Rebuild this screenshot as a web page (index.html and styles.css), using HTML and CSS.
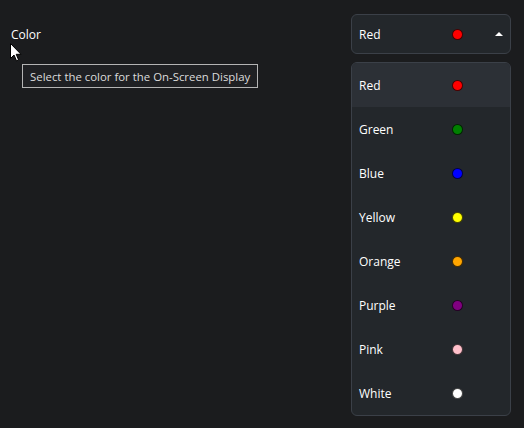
FILE: index.html
```html
<!DOCTYPE html>
<html>
<head>
<meta charset="utf-8">
<link rel="stylesheet" href="styles.css">
</head>
<body>
<div class="page">
  <div class="row">
    <div class="label">Color</div>
    <div class="select-wrap">
      <div class="select">
        <span class="name">Red</span>
        <span class="dot" style="background:#ff0000"></span>
        <span class="caret"></span>
      </div>
      <div class="menu">
        <div class="item active"><span class="name">Red</span><span class="dot" style="background:#ff0000"></span></div>
        <div class="item"><span class="name">Green</span><span class="dot" style="background:#008000"></span></div>
        <div class="item"><span class="name">Blue</span><span class="dot" style="background:#0000ff"></span></div>
        <div class="item"><span class="name">Yellow</span><span class="dot" style="background:#ffff00"></span></div>
        <div class="item"><span class="name">Orange</span><span class="dot" style="background:#ffa500"></span></div>
        <div class="item"><span class="name">Purple</span><span class="dot" style="background:#800080"></span></div>
        <div class="item"><span class="name">Pink</span><span class="dot" style="background:#ffc0cb"></span></div>
        <div class="item"><span class="name">White</span><span class="dot" style="background:#ffffff"></span></div>
      </div>
    </div>
  </div>
  <div class="tooltip">Select the color for the On-Screen Display</div>
  <svg class="cursor" width="12" height="19" viewBox="0 0 12 19">
    <path d="M0.5 0.5 L0.5 15.5 L4 12 L6.5 17.8 L8.6 16.9 L6.2 11.3 L11 11.3 Z" fill="#fff" stroke="#000" stroke-width="1"/>
  </svg>
</div>
</body>
</html>
```
FILE: styles.css
```css
html, body {
  margin: 0;
  padding: 0;
  background: #1b1c1e;
  width: 524px;
  height: 428px;
  overflow: hidden;
}
.page {
  position: relative;
  width: 524px;
  height: 428px;
  font-family: "Open Sans", "Noto Sans", sans-serif;
  font-size: 12px;
  color: #ffffff;
}
.row {
  display: flex;
  justify-content: space-between;
  align-items: flex-start;
  padding: 14px 13px 0 11px;
}
.label {
  margin-top: 13px;
  line-height: 16px;
  color: #ffffff;
}
.select-wrap {
  position: relative;
  width: 160px;
}
.select {
  box-sizing: border-box;
  height: 40px;
  border: 1px solid #3b4048;
  border-radius: 6px;
  background: #23272b;
  display: flex;
  align-items: center;
  padding-left: 7px;
}
.name {
  width: 93px;
  line-height: 16px;
  padding-top: 2px;
}
.dot {
  box-sizing: border-box;
  width: 11px;
  height: 11px;
  border-radius: 50%;
  border: 1px solid rgba(0,0,0,0.7);
}
.caret {
  margin-left: 32px;
  width: 0;
  height: 0;
  border-left: 4.5px solid transparent;
  border-right: 4.5px solid transparent;
  border-bottom: 4.5px solid #ffffff;
}
.menu {
  position: absolute;
  top: 48px;
  left: 0;
  width: 160px;
  box-sizing: border-box;
  border: 1px solid #3b4048;
  border-radius: 6px;
  background: #23272b;
  overflow: hidden;
}
.item {
  height: 44px;
  display: flex;
  align-items: center;
  padding-left: 7px;
}
.item.active {
  background: #2c3036;
}
.tooltip {
  position: absolute;
  left: 22px;
  top: 64px;
  box-sizing: border-box;
  height: 24px;
  padding: 1px 7px 0 7px;
  border: 1px solid #b4b4b4;
  background: #1f2023;
  color: #dcdcdc;
  font-size: 11.4px;
  line-height: 21px;
  white-space: nowrap;
}
.cursor {
  position: absolute;
  left: 10px;
  top: 43px;
}
```
